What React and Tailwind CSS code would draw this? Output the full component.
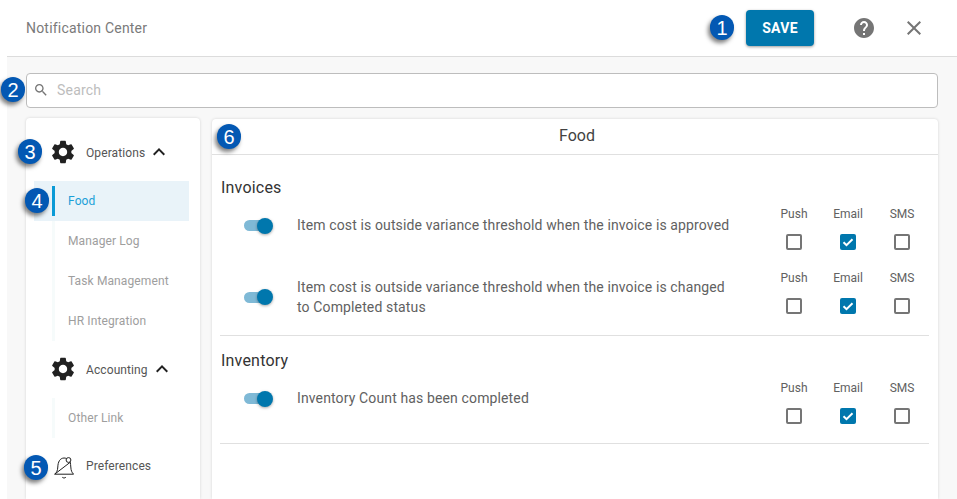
import React from "react";

const GEAR = "M19.14 12.94c.04-.3.06-.61.06-.94 0-.32-.02-.64-.07-.94l2.03-1.58c.18-.14.23-.41.12-.61l-1.92-3.32c-.12-.22-.37-.29-.59-.22l-2.39.96c-.5-.38-1.03-.7-1.62-.94l-.36-2.54c-.04-.24-.24-.41-.48-.41h-3.84c-.24 0-.43.17-.47.41l-.36 2.54c-.59.24-1.13.57-1.62.94l-2.39-.96c-.22-.08-.47 0-.59.22L2.74 8.87c-.12.21-.08.47.12.61l2.03 1.58c-.05.3-.09.63-.09.94s.02.64.07.94l-2.03 1.58c-.18.14-.23.41-.12.61l1.92 3.32c.12.22.37.29.59.22l2.39-.96c.5.38 1.03.7 1.62.94l.36 2.54c.05.24.24.41.48.41h3.84c.24 0 .44-.17.47-.41l.36-2.54c.59-.24 1.13-.56 1.62-.94l2.39.96c.22.08.47 0 .59-.22l1.92-3.32c.12-.22.07-.47-.12-.61l-2.01-1.58zM12 15.6c-1.98 0-3.6-1.62-3.6-3.6s1.62-3.6 3.6-3.6 3.6 1.62 3.6 3.6-1.62 3.6-3.6 3.6z";

const Icon = ({ d, className }) => (
  <svg viewBox="0 0 24 24" fill="currentColor" className={className} aria-hidden="true">
    <path d={d} />
  </svg>
);

const Chevron = () => (
  <Icon d="M12 8l-6 6 1.41 1.41L12 10.83l4.59 4.58L18 14z" className="w-6 h-6 ml-[2px] text-[#212121]" />
);

// numbered callouts laid over the screenshot
const Badge = ({ n, className }) => (
  <div
    className={`absolute w-[24px] h-[25px] rounded-full bg-[#0358b3] text-white flex items-center justify-center text-[20px] shadow-[-2px_3px_4px_rgba(0,0,0,0.5)] font-['Liberation_Sans',sans-serif] ${className}`}
  >
    {n}
  </div>
);

const NavGroup = ({ label }) => (
  <div className="h-10 flex items-center pl-[23px]">
    <Icon d={GEAR} className="w-7 h-7 text-[#212121]" />
    <span className="ml-[9px] mt-[2px] text-xs tracking-[0.1px] text-[#555555]">{label}</span>
    <Chevron />
  </div>
);

const NavLink = ({ label, active }) => (
  <div className={`h-10 ml-2 mr-[11px] pl-[18px] flex items-center ${active ? "bg-[#e9f3f9]" : ""}`}>
    <div className={`w-[3px] ${active ? "h-[30px] bg-[#0a9ad6]" : "h-10 bg-[#f6fbfb]"}`} />
    <span className={`ml-[13px] text-xs tracking-[0.12px] ${active ? "text-[#1a9fd8]" : "text-[#9e9e9e]"}`}>{label}</span>
  </div>
);

const Toggle = () => (
  <div className="flex items-center ml-6 mr-6 shrink-0">
    <div className="w-6 h-[11px] rounded-full bg-[#7fb9d6]" />
    <div className="w-4 h-4 rounded-full bg-[#0077ad] -ml-[11px] shadow-[0_1px_3px_rgba(0,0,0,0.35)]" />
  </div>
);

const Check = ({ on }) => (
  <div className="w-[54px] flex flex-col items-center">
    {on ? (
      <div className="w-4 h-4 rounded-[2px] bg-[#0077ad] flex items-center justify-center">
        <svg viewBox="0 0 16 16" className="w-4 h-4" fill="none" stroke="white" strokeWidth="2">
          <path d="M3.5 8.2l3 3 6-6" />
        </svg>
      </div>
    ) : (
      <div className="w-4 h-4 rounded-[2px] border-2 border-[#757575]" />
    )}
  </div>
);

const Channels = () => (
  <div className="shrink-0 ml-auto">
    <div className="flex h-4 mt-[1px] items-center">
      {["Push", "Email", "SMS"].map((c) => (
        <div key={c} className="w-[54px] text-center text-xs text-[#616161]">{c}</div>
      ))}
    </div>
    <div className="flex mt-3">
      <Check />
      <Check on />
      <Check />
    </div>
  </div>
);

const Row = ({ children, wrap = "pt-[9px]", text = "leading-[21px]" }) => (
  <div className="h-16 flex items-start">
    <div className={`flex items-center ${wrap}`}>
      <Toggle />
      <p className={`w-[440px] text-sm tracking-[0.13px] text-[#616161] ${text}`}>{children}</p>
    </div>
    <Channels />
  </div>
);

export default function App() {
  return (
    <div className="relative h-[499px] overflow-hidden bg-white pl-[7px] font-['Roboto',sans-serif]">
      <div className="h-full flex flex-col">
        <header className="h-[57px] shrink-0 flex items-center border-b border-[#dcdcdc] pl-[19px]">
          <h1 className="text-sm tracking-[0.2px] text-[#7a7a7a]">Notification Center</h1>
          <button className="ml-auto w-[68px] h-9 -mt-[1px] rounded-[4px] bg-[#0077ad] text-white text-sm font-bold tracking-[0.3px] shadow-[0_1px_3px_rgba(0,0,0,0.4)]">
            SAVE
          </button>
          <Icon
            d="M12 2C6.48 2 2 6.48 2 12s4.48 10 10 10 10-4.48 10-10S17.52 2 12 2zm1 17h-2v-2h2v2zm2.07-7.75l-.9.92C13.45 12.9 13 13.5 13 15h-2v-.5c0-1.1.45-2.1 1.17-2.83l1.24-1.26c.37-.36.59-.86.59-1.41 0-1.1-.9-2-2-2s-2 .9-2 2H8c0-2.21 1.79-4 4-4s4 1.79 4 4c0 .88-.36 1.68-.93 2.25z"
            className="w-6 h-6 ml-[38px] text-[#757575]"
          />
          <Icon
            d="M19 6.41L17.59 5 12 10.59 6.41 5 5 6.41 10.59 12 5 17.59 6.41 19 12 13.41 17.59 19 19 17.59 13.41 12z"
            className="w-6 h-6 ml-[26px] mr-[31px] text-[#757575]"
          />
        </header>

        <div className="flex-1 min-h-0 bg-[#f8f8f8] pl-[19px] pr-[19px] pt-4 flex flex-col">
          <div className="h-[35px] shrink-0 flex items-center rounded-[4px] border border-[#bdbdbd] bg-white pl-[6px]">
            <svg viewBox="0 0 24 24" fill="currentColor" className="w-4 h-4 -mt-[1px] text-[#757575]">
              <path d="M15.5 14h-.79l-.28-.27C15.41 12.59 16 11.11 16 9.5 16 5.91 13.09 3 9.5 3S3 5.91 3 9.5 5.91 16 9.5 16c1.61 0 3.09-.59 4.23-1.57l.27.28v.79l5 4.99L20.49 19l-4.99-5zm-6 0C7.01 14 5 11.99 5 9.5S7.01 5 9.5 5 14 7.01 14 9.5 11.99 14 9.5 14z" />
            </svg>
            <input
              placeholder="Search"
              className="ml-2 -mt-[2px] flex-1 text-sm tracking-[0.2px] outline-none placeholder:text-[#bdbdbd]"
            />
          </div>

          <div className="flex-1 min-h-0 mt-[10px] flex gap-3">
            <nav className="w-[174px] shrink-0 rounded-t-[4px] bg-white shadow-[0_0_3px_rgba(0,0,0,0.15)] pt-[14px]">
              <NavGroup label="Operations" />
              <div className="mt-[9px]">
                <NavLink label="Food" active />
                <NavLink label="Manager Log" />
                <NavLink label="Task Management" />
                <NavLink label="HR Integration" />
              </div>
              <div className="mt-2">
                <NavGroup label="Accounting" />
              </div>
              <div className="mt-[9px]">
                <NavLink label="Other Link" />
              </div>
              <div className="mt-2 h-10 flex items-center pl-[28px]">
                <svg viewBox="0 0 20 24" className="w-5 h-6 mt-[3px]" fill="none" stroke="#212121" strokeWidth="1">
                  <path d="M.7 18.2C2.800 16.500 3.600 14.500 3.800 11 4 6 5.800 2.200 10 2c.8 0 1.600.1 2.400.5M16.300 6.200c.3 1.300.3 3.300.5 4.800.2 3.500 1 5.500 2.800 7.200H.7z" />
                  <circle cx="14.500" cy="4" r="2.400" />
                  <path d="M8.300 21.300c1 .9 2.500 .9 3.500 0" />
                </svg>
                <span className="ml-3 -mt-[1px] text-xs tracking-[0.1px] text-[#555555]">Preferences</span>
              </div>
            </nav>

            <main className="flex-1 min-w-0 mt-[1px] rounded-t-[4px] bg-white shadow-[0_0_3px_rgba(0,0,0,0.15)]">
              <div className="h-[36px] pl-1 pb-[2px] flex items-center justify-center border-b border-[#e0e0e0] text-base text-[#424242]">
                Food
              </div>
              <div className="pl-2 pr-[9px] pt-5">
                <h2 className="pl-[1px] pt-[1px] text-base leading-6 tracking-[0.2px] text-[#333333]">Invoices</h2>
                <div className="mt-[5px]">
                  <Row wrap="pt-[10px]">Item cost is outside variance threshold when the invoice is approved</Row>
                  <Row wrap="pt-[8px]" text="leading-[20px]">Item cost is outside variance threshold when the invoice is changed to Completed status</Row>
                </div>
                <div className="mt-[2px] border-t border-[#e0e0e0] pt-3">
                  <h2 className="pl-[1px] pt-[1px] text-base leading-6 tracking-[0.2px] text-[#333333]">Inventory</h2>
                  <div className="mt-[6px] border-b border-[#e0e0e0]">
                    <Row>Inventory Count has been completed</Row>
                  </div>
                </div>
              </div>
            </main>
          </div>
        </div>
      </div>

      <Badge n="1" className="left-[710px] top-[15px]" />
      <Badge n="2" className="left-[1px] top-[77px]" />
      <Badge n="3" className="left-[18px] top-[139px]" />
      <Badge n="4" className="left-[25px] top-[188px]" />
      <Badge n="5" className="left-[24px] top-[455px]" />
      <Badge n="6" className="left-[217px] top-[124px]" />
    </div>
  );
}
